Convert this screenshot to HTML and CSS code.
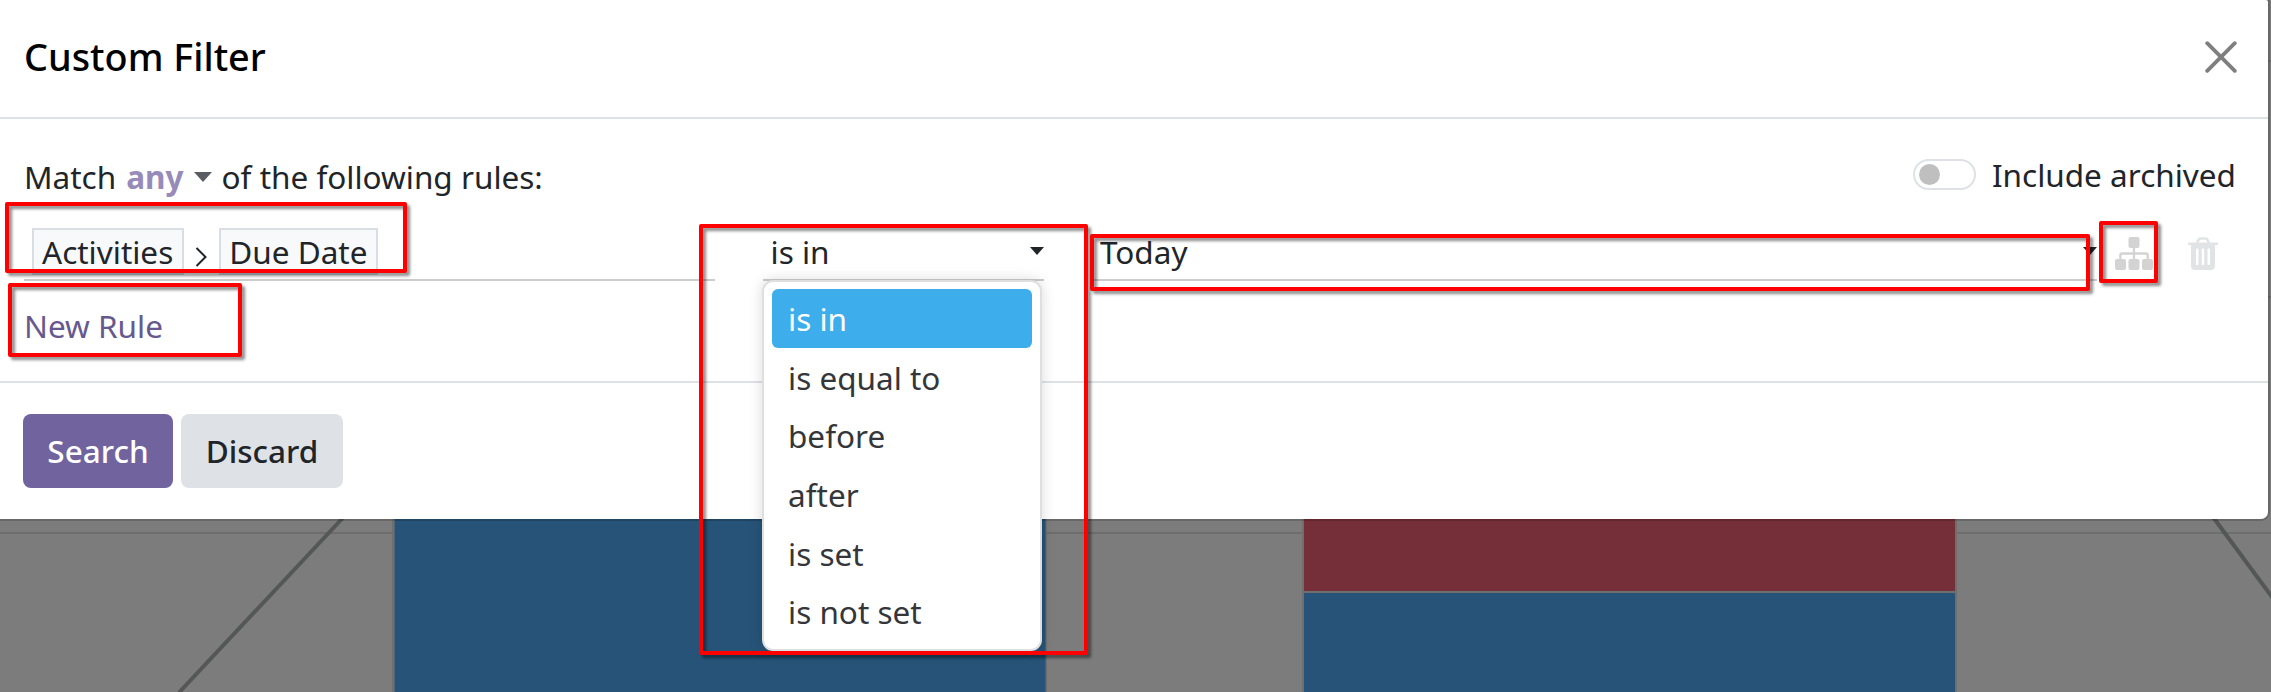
FILE: index.html
```
<!DOCTYPE html>
<html lang="en">
<head>
<meta charset="utf-8">
<title>Custom Filter</title>
<link rel="stylesheet" href="styles.css">
</head>
<body>
<svg class="chart" width="2271" height="692" viewBox="0 0 2271 692" aria-hidden="true">
  <path d="M0 533H2271M2260 61H2271M2260 297H2271" stroke="#6d6d6d" stroke-width="2"/>
  <path d="M346 514.500L179 692.500M2210 513L2275 601" stroke="#555756" stroke-width="4" fill="none"/>
  <path d="M393 500V692M1046 500V692M1303 500V692M1956 500V692" stroke="#6f6f6f" stroke-width="2"/>
  <rect x="394.500" y="500" width="651" height="192" fill="#265377"/>
  <rect x="1304" y="500" width="651" height="91" fill="#752f38"/>
  <rect x="1304" y="591" width="651" height="2" fill="#6f6f70"/>
  <rect x="1304" y="593" width="651" height="99" fill="#265377"/>
</svg>

<main class="modal">
  <header class="modal-header">
    <h1 class="title">Custom Filter</h1>
    <button class="close" aria-label="Close"><svg width="32" height="32" viewBox="0 0 32 32"><path d="M2.200 2.200L29.800 29.800M29.800 2.200L2.200 29.800" stroke="#7f7f7f" stroke-width="3.800" stroke-linecap="round"/></svg></button>
  </header>

  <section class="modal-body">
    <div class="match-row">
      <div class="match"><span>Match</span><span class="any">any</span><svg class="match-caret" width="18" height="10" viewBox="0 0 18 10"><path d="M0 0H18L9 10Z" fill="#5a5e62"/></svg><span>of the following rules:</span></div>
      <label class="archived"><span class="switch"><span class="knob"></span></span><span>Include archived</span></label>
    </div>

    <div class="rule">
      <div class="field path">
        <span class="pill">Activities</span>
        <svg class="chevron" width="12" height="20" viewBox="0 0 12 20"><path d="M1.500 1L10.500 10L1.500 19" stroke="#212529" stroke-width="2" fill="none"/></svg>
        <span class="pill">Due Date</span>
      </div>
      <div class="field operator"><span>is in</span><svg class="caret" width="14" height="8" viewBox="0 0 14 8"><path d="M0 0H14L7 8Z" fill="#212529"/></svg>
        <ul class="menu">
          <li class="option selected">is in</li>
          <li class="option">is equal to</li>
          <li class="option">before</li>
          <li class="option">after</li>
          <li class="option">is set</li>
          <li class="option">is not set</li>
        </ul>
      </div>
      <div class="field value"><span>Today</span><svg class="caret" width="14" height="8" viewBox="0 0 14 8"><path d="M0 0H14L7 8Z" fill="#212529"/></svg></div>
      <svg class="branch" width="38" height="33" viewBox="0 0 38 33" fill="#d3d3d3"><rect x="13.500" width="11" height="11" rx="2"/><rect y="22" width="11" height="11" rx="2"/><rect x="13.500" y="22" width="11" height="11" rx="2"/><rect x="27" y="22" width="11" height="11" rx="2"/><path d="M19 10V23M5.300 23V18.500Q5.300 16.500 7.300 16.500H30.700Q32.700 16.500 32.700 18.500V23" stroke="#d3d3d3" stroke-width="2.300" fill="none"/></svg>
      <svg class="trash" width="30" height="33" viewBox="0 0 30 33"><path d="M9 6L10.500 2.700Q11 1.500 12.500 1.500H17.500Q19 1.500 19.500 2.700L21 6" fill="none" stroke="#e1e3e5" stroke-width="2.500"/><path fill-rule="evenodd" fill="#e1e3e5" d="M.800 5.500H29.200Q30 5.500 30 6.300V7.200Q30 8 29.200 8H27V28.500Q27 33 23 33H7Q3 33 3 28.500V8H.800Q0 8 0 7.200V6.300Q0 5.500 .800 5.500ZM8.700 11.500Q8 11.500 8 12.200V27.300Q8 28 8.700 28H9.800Q10.500 28 10.500 27.300V12.200Q10.500 11.500 9.800 11.500ZM14.400 11.500Q13.700 11.500 13.700 12.200V27.300Q13.700 28 14.400 28H15.500Q16.200 28 16.200 27.300V12.200Q16.200 11.500 15.500 11.500ZM20.200 11.500Q19.500 11.500 19.500 12.200V27.300Q19.500 28 20.200 28H21.300Q22 28 22 27.300V12.200Q22 11.500 21.300 11.500Z"/></svg>
    </div>
    <a class="new-rule">New Rule</a>
  </section>

  <footer class="modal-footer">
    <button class="btn primary">Search</button>
    <button class="btn secondary">Discard</button>
  </footer>
</main>

<div class="mark mark-path"></div>
<div class="mark mark-new"></div>
<div class="mark mark-operator"></div>
<div class="mark mark-value"></div>
<div class="mark mark-branch"></div>
</body>
</html>
```
FILE: styles.css
```
* { box-sizing: border-box; }
body {
  margin: 0;
  height: 692px;
  overflow: hidden;
  position: relative;
  background: #7c7c7c;
  color: #212529;
  font: 31.5px/47px "Noto Sans", sans-serif;
}
svg { display: block; flex: none; }
button { border: 0; padding: 0; font: inherit; }
.chart { position: absolute; left: 0; top: 0; }

.modal {
  position: relative;
  width: 2268px;
  height: 519px;
  background: #fff;
  border-radius: 0 2px 7px 0;
  box-shadow: 0 0 0 2px #00000029;
}
.modal-header {
  height: 119px;
  padding: 0 31.5px 4px 24px;
  border-bottom: 2px solid #dee2e6;
  display: flex;
  align-items: center;
  justify-content: space-between;
}
.title { margin: 0; font-size: 37.8px; font-weight: 500; color: #000; }
.close { background: none; }
.modal-body {
  height: 264px;
  padding: 34px 32px 0 24px;
  border-bottom: 2px solid #dee2e6;
}
.match-row { display: flex; justify-content: space-between; height: 75px; }
.match { display: flex; white-space: pre; }
.any { margin-left: 10px; color: #968bb9; font-weight: 700; }
.match-caret { margin: 19px 10px 0 10px; }
.archived { display: flex; margin-top: -2px; }
.switch {
  width: 63px;
  height: 31px;
  margin: 8px 16px 0 0;
  padding: 3px 4px;
  border: 2px solid #dee2e6;
  border-radius: 16px;
}
.knob { display: block; width: 21px; height: 21px; border-radius: 50%; background: #bfbfbf; }

.rule { display: flex; height: 53px; }
.field {
  border-bottom: 2px solid #ccc;
  display: flex;
  align-items: flex-start;
}
.path { width: 691px; padding-left: 8px; }
.pill {
  height: 47px;
  padding: 0 8.5px 0 8px;
  border: 2px solid #d9dee5;
  background: #f8f9fb;
  line-height: 43px;
}
.chevron { margin: 19px 12px 0 11.5px; }
.operator { width: 281px; margin-left: 48px; padding-left: 7.5px; }
.operator, .value { position: relative; justify-content: space-between; }
.value { width: 1004px; margin-left: 49px; padding-left: 7px; }
.caret { margin-top: 19px; }
.branch { margin: 9px 0 0 17.5px; }
.trash { margin: 9px 0 0 35.5px; }
.new-rule { display: block; margin-top: 21px; color: #66598f; }

.menu {
  position: absolute;
  z-index: 1;
  left: -1px;
  top: 52px;
  width: 280px;
  height: 371px;
  margin: 0;
  padding: 7px 8px;
  list-style: none;
  background: #fff;
  border: 2px solid #dfdfdf;
  border-radius: 11px;
  box-shadow: 0 0 14px #00000026;
}
.option { height: 58.7px; padding-left: 16px; line-height: 59px; color: #343639; }
.selected { background: #3daeeb; color: #fff; border-radius: 6px; }

.modal-footer { display: flex; gap: 8px; padding: 31px 23px; }
.btn { height: 74px; padding-bottom: 2px; border-radius: 8px; font-weight: 500; }
.primary { width: 150px; background: #71639e; color: #fff; }
.secondary { width: 162px; background: #dee2e6; color: #212529; }

/* Highlight frames laid over the dialog */
.mark {
  position: absolute;
  z-index: 2;
  border: 4px solid #f00;
  border-radius: 2px;
  filter: drop-shadow(3px 3px 1.5px #00000073);
}
.mark-path { left: 5px; top: 202px; width: 402px; height: 71px; }
.mark-new { left: 8px; top: 283px; width: 234px; height: 74px; }
.mark-operator { left: 699px; top: 224px; width: 389px; height: 431px; }
.mark-value { left: 1090px; top: 234px; width: 1000px; height: 57px; }
.mark-branch { left: 2099px; top: 221px; width: 59px; height: 62px; }
```
